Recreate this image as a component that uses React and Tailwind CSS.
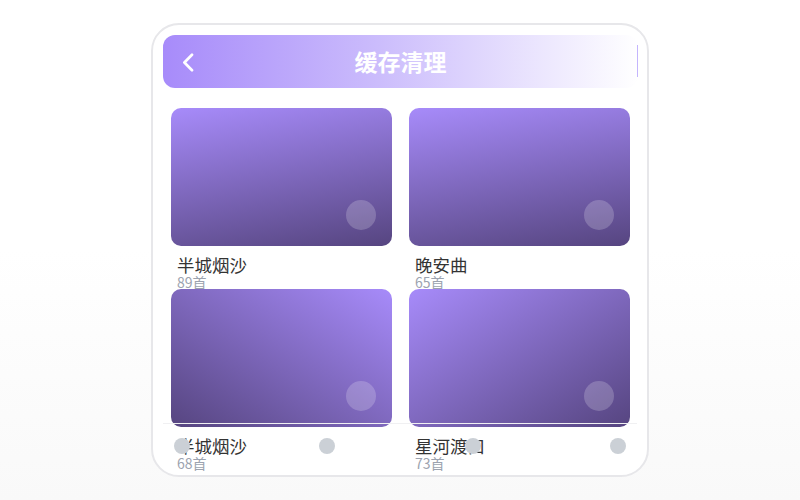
import React from "react";

const items = [
  { title: "半城烟沙", count: "89首", bg: "bg-[linear-gradient(170deg,#a78bfa,#564580)]" },
  { title: "晚安曲", count: "65首", bg: "bg-[linear-gradient(170deg,#a78bfa,#564580)]" },
  { title: "半城烟沙", count: "68首", bg: "bg-[linear-gradient(to_bottom_left,#a78bfa,#564580)]" },
  { title: "星河渡口", count: "73首", bg: "bg-[linear-gradient(to_bottom_right,#a78bfa,#564580)]" },
];

function Card({ item }) {
  return (
    <div className="flex flex-col">
      <div className={`relative h-[138px] rounded-[10px] ${item.bg}`}>
        <div className="absolute right-4 bottom-4 w-[30px] h-[30px] rounded-full bg-white/20" />
      </div>
      <div className="pl-[6px] mt-[9px] text-[17.5px] leading-[20px] text-[#333]">{item.title}</div>
      <div className="pl-[6px] text-[14px] leading-[14px] text-[#9ca3af]">{item.count}</div>
    </div>
  );
}

export default function App() {
  return (
    <div
      className="w-[800px] h-[500px] flex items-center justify-center bg-[linear-gradient(to_bottom,#ffffff_50%,#f9f9f9)]"
      style={{ fontFamily: '"Noto Sans CJK SC", "Noto Sans", sans-serif' }}
    >
      <div className="relative w-[498px] h-[454px] rounded-[28px] border-2 border-[#e7e7ea] bg-white overflow-hidden pl-[10px] pr-[9px] pt-[10px]">
        <div className="relative h-[53px] rounded-[12px] bg-[linear-gradient(to_right,#a78bfa,#cbbcfc_45%,#ffffff)] flex items-center justify-center">
          <svg className="absolute left-[19px] top-[18px]" width="12" height="19" viewBox="0 0 12 19" fill="none">
            <path d="M10 1.8 L2.4 9.5 L10 17.2" stroke="#ffffff" strokeWidth="2.7" strokeLinecap="round" strokeLinejoin="round" />
          </svg>
          <span className="text-white font-bold text-[23px] leading-none">缓存清理</span>
          <div className="absolute right-0 top-[10px] bottom-[11px] w-px bg-[#c4b5fd]" />
        </div>
        <div className="grid grid-cols-2 gap-x-[17px] px-[8px] mt-[20px]">
          {items.map((it, i) => (
            <Card key={i} item={it} />
          ))}
        </div>
        <div className="absolute left-[10px] right-[10px] bottom-[7px] h-[45px] border-t border-[#f0f0f2] flex items-center justify-between px-[11px]">
          <div className="w-4 h-4 rounded-full bg-[#cbd0d6]" />
          <div className="w-4 h-4 rounded-full bg-[#cbd0d6]" />
          <div className="w-4 h-4 rounded-full bg-[#cbd0d6]" />
          <div className="w-4 h-4 rounded-full bg-[#cbd0d6]" />
        </div>
      </div>
    </div>
  );
}
